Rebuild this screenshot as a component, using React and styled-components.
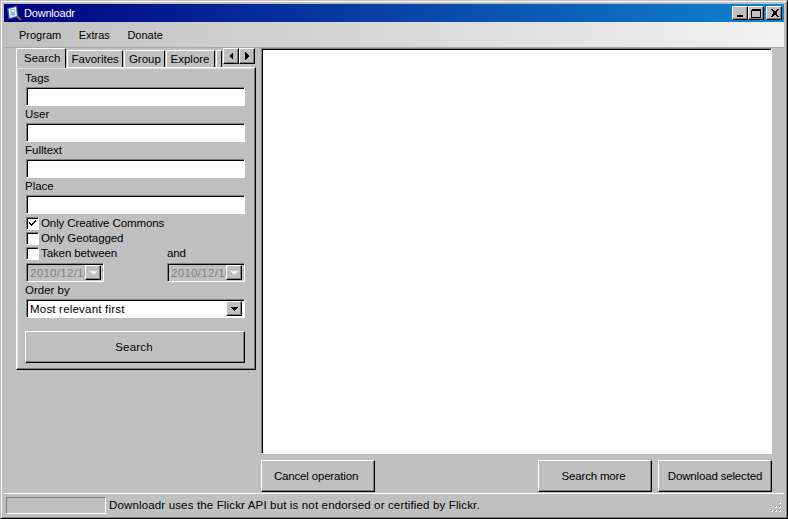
import React from "react";
import styled, { createGlobalStyle } from "styled-components";

const Global = createGlobalStyle`
  html, body { margin: 0; padding: 0; background: #c0c0c0; }
  * { box-sizing: border-box; }
  body { font: 11.5px/14px "Liberation Sans", Arial, sans-serif; color: #000; }
`;

const raised = `
  border: 1px solid;
  border-color: #fff #000 #000 #fff;
  box-shadow: inset -1px -1px 0 #808080;
`;
const sunken = `
  border: 1px solid;
  border-color: #808080 #fff #fff #808080;
  box-shadow: inset 1px 1px 0 #000;
`;

const Frame = styled.div`
  width: 788px; height: 519px;
  border: 1px solid; border-color: #c0c0c0 #000 #000 #c0c0c0;
`;
const FrameInner = styled.div`
  height: 100%;
  border: 1px solid; border-color: #fff #808080 #808080 #fff;
  padding: 2px;
  display: flex; flex-direction: column;
`;
const TitleBar = styled.div`
  height: 18px; flex: none;
  background: linear-gradient(90deg, #000080, #1084d0);
  display: flex; align-items: center;
  padding: 0 2px; color: #fff;
`;
const TitleIcon = styled.svg`width: 16px; height: 16px; flex: none;`;
const TitleText = styled.span`margin-left: 2px; flex: 1; font-size: 11px; letter-spacing: -0.2px;`;
const WinButtons = styled.div`display: flex;`;
const WinButton = styled.button`
  ${raised}
  width: 16px; height: 14px; padding: 0; background: #c0c0c0;
  display: flex; align-items: center; justify-content: center;
  margin-left: ${p => (p.$gap ? "2px" : "0")};
  svg { display: block; }
`;
const MenuBar = styled.div`
  height: 26px; flex: none;
  background: linear-gradient(90deg, #c0c0c0, #f2f2f2);
  border-bottom: 1px solid #a8a8a8;
  display: flex; align-items: center; padding: 0 0 0 15px; font-size: 11px;
`;
const MenuItem = styled.span`margin-right: 17.5px;`;
const Main = styled.div`
  flex: 1; min-height: 0;
  display: flex; padding: 0 12px;
`;
const Left = styled.div`width: 240px; flex: none; margin-right: 5px;`;
const TabStrip = styled.div`
  height: 19px; display: flex; align-items: flex-end; position: relative; z-index: 1;
`;
const Tab = styled.div`
  height: ${p => (p.$active ? "20px" : "17px")};
  width: ${p => p.$w}px;
  margin-right: 1px;
  margin-bottom: ${p => (p.$active ? "-1px" : "0")};
  background: #c0c0c0;
  border: 1px solid; border-bottom: 0;
  border-color: #fff #000 #000 #fff;
  border-radius: 2px 2px 0 0;
  padding: ${p => (p.$active ? "2px 0 0 7px" : "1px 0 0 4px")};
  overflow: hidden; white-space: nowrap;
`;
const TabScroll = styled.div`display: flex; margin: 0 1px 3px 0;`;
const TabScrollBtn = styled.button`
  ${raised}
  width: 16px; height: 16px; padding: 0; background: #c0c0c0;
  display: flex; align-items: center; justify-content: center;
`;
const Panel = styled.div`
  ${raised}
  height: 303px;
  box-shadow: inset -1px -1px 0 #808080, inset 1px 1px 0 #dfdfdf;
  padding: 2px 8px 0 8px;
  display: flex; flex-direction: column;
`;
const Label = styled.div`height: 17px; flex: none; line-height: 16px;`;
const Input = styled.div`
  ${sunken}
  height: 19px; flex: none; width: 219px; background: #fff; margin-left: 1px;
`;
const Checks = styled.div`margin-top: 2px;`;
const CheckRow = styled.div`
  height: 15px; flex: none; display: flex; align-items: center; margin-left: 1px; letter-spacing: -0.1px;
`;
const CheckBox = styled.div`
  ${sunken}
  width: 13px; height: 13px; flex: none; background: #fff; margin-right: 2px;
  display: flex; align-items: center; justify-content: center;
`;
const CheckText = styled.span`flex: 1; line-height: 13px; padding-bottom: 1px;`;
const AndText = styled.span`width: 80px; line-height: 13px; padding-bottom: 1px;`;
const DateRow = styled.div`
  display: flex; justify-content: space-between; width: 219px; margin: 2px 0 0 1px; height: 19px; flex: none;
`;
const DateField = styled.div`
  ${sunken}
  width: 78px; height: 19px; background: #c0c0c0; color: #808080;
  display: flex; align-items: center; padding: 2px 2px 2px 3px; overflow: hidden;
`;
const DateText = styled.span`flex: 1; overflow: hidden; white-space: nowrap; letter-spacing: 0.3px;`;
const ComboBtn = styled.div`
  ${raised}
  width: 16px; height: 15px; flex: none; background: #c0c0c0;
  display: flex; align-items: center; justify-content: center;
`;
const Select = styled.div`
  ${sunken}
  width: 219px; height: 19px; margin-left: 1px; flex: none; background: #fff;
  display: flex; align-items: center; padding: 2px 2px 2px 3px; letter-spacing: 0.2px;
`;
const SelectText = styled.span`flex: 1;`;
const PushButton = styled.button`
  ${raised}
  width: ${p => p.$w}px; height: 32px; flex: none;
  background: #c0c0c0; font: inherit; letter-spacing: -0.17px; color: #000; padding: 0 ${p => p.$nudge || 0}px 0 0;
`;
const SearchBtn = styled(PushButton)`margin-top: 13px; letter-spacing: 0.2px;`;
const Right = styled.div`flex: 1; min-width: 0; display: flex; flex-direction: column;`;
const WebView = styled.div`
  ${sunken}
  height: 406px; flex: none; width: 511px; background: #fff;
`;
const Actions = styled.div`
  display: flex; margin-top: 6px; gap: 6px;
`;
const Spacer = styled.div`flex: 1;`;
const StatusBar = styled.div`
  height: 22px; flex: none; border-top: 1px solid #fff; margin-top: 1px;
  display: flex; align-items: center; padding: 1px 0 0 2px; position: relative;
`;
const Progress = styled.div`
  width: 100px; height: 17px; border: 1px solid; border-color: #808080 #fff #fff #808080; margin-right: 3px; flex: none;
`;
const StatusText = styled.span`white-space: nowrap; letter-spacing: 0.15px;`;
const Grip = styled.svg`position: absolute; right: 1px; bottom: 1px; width: 14px; height: 14px;`;

const Arrow = ({ dir = "down", color = "#000" }) => {
  const pts = { down: "0,0 7,0 3.5,4", left: "4,0 4,8 0,4", right: "0,0 0,8 4,4" }[dir];
  const s = dir === "down" ? [7, 4] : [4, 8];
  return <svg width={s[0]} height={s[1]} viewBox={`0 0 ${s[0]} ${s[1]}`} shapeRendering="crispEdges"><polygon points={pts} fill={color} /></svg>;
};

const gripDots = [[10,2],[6,6],[10,6],[2,10],[6,10],[10,10]];

export default function App() {
  return (
    <>
      <Global />
      <Frame>
        <FrameInner>
          <TitleBar>
            <TitleIcon viewBox="0 0 16 16">
              <polygon points="1,3 11,0.5 12.5,12 2.5,14.5" fill="#3c4f8c" />
              <polygon points="2.5,4 10,2 11,11 3.5,13" fill="#f0f2f8" />
              <rect x="4.5" y="4" width="4.5" height="6.5" fill="#8cb4e8" />
              <circle cx="7" cy="6" r="1.3" fill="#f4f4f4" />
              <path d="M11 11.5 L15 15" stroke="#8a6a3a" strokeWidth="2" />
            </TitleIcon>
            <TitleText>Downloadr</TitleText>
            <WinButtons>
              <WinButton aria-label="Minimize">
                <svg width="8" height="8" shapeRendering="crispEdges"><rect x="1" y="6" width="6" height="2" fill="#000" /></svg>
              </WinButton>
              <WinButton aria-label="Maximize">
                <svg width="10" height="9" shapeRendering="crispEdges"><path d="M0.5 1.5H9.5V8.5H0.5Z M0.5 0.5H9.5" fill="none" stroke="#000" /></svg>
              </WinButton>
              <WinButton $gap aria-label="Close">
                <svg width="9" height="8" viewBox="0 0 9 8" shapeRendering="crispEdges"><path d="M1 0L8 8M2 0L9 8M8 0L1 8M9 0L2 8" stroke="#000" strokeWidth="1" fill="none" /></svg>
              </WinButton>
            </WinButtons>
          </TitleBar>
          <MenuBar>
            <MenuItem>Program</MenuItem>
            <MenuItem>Extras</MenuItem>
            <MenuItem>Donate</MenuItem>
          </MenuBar>
          <Main>
            <Left>
              <TabStrip>
                <Tab $active $w={50}>Search</Tab>
                <Tab $w={57}>Favorites</Tab>
                <Tab $w={41}>Group</Tab>
                <Tab $w={50}>Explore</Tab>
                <Tab $w={5} />
                <TabScroll>
                  <TabScrollBtn aria-label="Previous"><Arrow dir="left" /></TabScrollBtn>
                  <TabScrollBtn aria-label="Next"><Arrow dir="right" /></TabScrollBtn>
                </TabScroll>
              </TabStrip>
              <Panel>
                <Label>Tags</Label>
                <Input />
                <Label>User</Label>
                <Input />
                <Label>Fulltext</Label>
                <Input />
                <Label>Place</Label>
                <Input />
                <Checks>
                  <CheckRow>
                    <CheckBox>
                      <svg width="9" height="9" viewBox="0 0 9 9" shapeRendering="crispEdges"><path d="M1 3h1v1h1v1h1V4h1V3h1V2h1V1h1v2H7v1H6v1H5v1H4v1H3V6H2V5H1z" fill="#000" /></svg>
                    </CheckBox>
                    <CheckText>Only Creative Commons</CheckText>
                  </CheckRow>
                  <CheckRow>
                    <CheckBox />
                    <CheckText>Only Geotagged</CheckText>
                  </CheckRow>
                  <CheckRow>
                    <CheckBox />
                    <CheckText>Taken between</CheckText>
                    <AndText>and</AndText>
                  </CheckRow>
                </Checks>
                <DateRow>
                  <DateField>
                    <DateText>2010/12/16</DateText>
                    <ComboBtn><Arrow color="#eee" /></ComboBtn>
                  </DateField>
                  <DateField>
                    <DateText>2010/12/16</DateText>
                    <ComboBtn><Arrow color="#eee" /></ComboBtn>
                  </DateField>
                </DateRow>
                <Label>Order by</Label>
                <Select>
                  <SelectText>Most relevant first</SelectText>
                  <ComboBtn><Arrow /></ComboBtn>
                </Select>
                <SearchBtn $w={220} $nudge={2}>Search</SearchBtn>
              </Panel>
            </Left>
            <Right>
              <WebView />
              <Actions>
                <PushButton $w={114} $nudge={4}>Cancel operation</PushButton>
                <Spacer />
                <PushButton $w={114} $nudge={3}>Search more</PushButton>
                <PushButton $w={114}>Download selected</PushButton>
              </Actions>
            </Right>
          </Main>
          <StatusBar>
            <Progress />
            <StatusText>Downloadr uses the Flickr API but is not endorsed or certified by Flickr.</StatusText>
            <Grip viewBox="0 0 14 14" shapeRendering="crispEdges">
              {gripDots.map(([x, y]) => (
                <g key={`${x}-${y}`}>
                  <rect x={x} y={y} width="2" height="2" fill="#fff" />
                  <rect x={x} y={y} width="1" height="1" fill="#808080" />
                </g>
              ))}
            </Grip>
          </StatusBar>
        </FrameInner>
      </Frame>
    </>
  );
}
